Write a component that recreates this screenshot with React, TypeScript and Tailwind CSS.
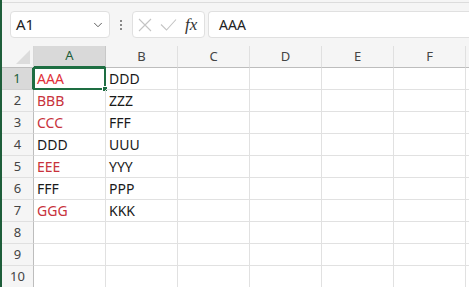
import React from 'react';
import { ChevronDown } from 'lucide-react';

const COLS = ['A', 'B', 'C', 'D', 'E', 'F', ''];

type Cell = { text: string; red?: boolean };

const DATA: Cell[][] = [
  [{ text: 'AAA', red: true }, { text: 'DDD' }],
  [{ text: 'BBB', red: true }, { text: 'ZZZ' }],
  [{ text: 'CCC', red: true }, { text: 'FFF' }],
  [{ text: 'DDD' }, { text: 'UUU' }],
  [{ text: 'EEE', red: true }, { text: 'YYY' }],
  [{ text: 'FFF' }, { text: 'PPP' }],
  [{ text: 'GGG', red: true }, { text: 'KKK' }],
  [],
  [],
  [],
];

const App: React.FC = () => {
  return (
    <div
      className="w-[469px] h-[287px] overflow-hidden bg-[#f5f5f5] border-l-2 border-[#1e5e3a] text-[#222]"
      style={{ fontFamily: '"Noto Sans", "Open Sans", sans-serif' }}
    >
      {/* formula bar */}
      <div className="h-[44px] border-t border-[#dcdcdc] mt-[2px] flex items-start pt-[8px] pl-[8px] gap-[3px]">
        <div className="w-[100px] h-[27px] bg-white rounded-[4px] border border-[#e0e0e0] flex items-center pl-[5px] pr-[4px]">
          <span className="text-[15px] flex-1">A1</span>
          <ChevronDown size={14} strokeWidth={1.6} className="text-[#555]" />
        </div>
        <div className="w-[16px] h-[27px] flex flex-col items-center justify-center gap-[2px]">
          <span className="w-[2px] h-[2px] bg-[#888]" />
          <span className="w-[2px] h-[2px] bg-[#888]" />
          <span className="w-[2px] h-[2px] bg-[#888]" />
        </div>
        <div className="w-[73px] h-[27px] bg-white rounded-[4px] border border-[#e0e0e0] flex items-center pl-[5px]">
          <svg width="14" height="14" viewBox="0 0 14 14" className="text-[#c4c4c4]">
            <path d="M1 1 L13 13 M13 1 L1 13" stroke="currentColor" strokeWidth="1.1" fill="none" />
          </svg>
          <svg width="17" height="13" viewBox="0 0 17 13" className="ml-[8px] text-[#c4c4c4]">
            <path d="M1 6.5 L6.5 12 L16 1.5" stroke="currentColor" strokeWidth="1.1" fill="none" />
          </svg>
          <span
            className="ml-[8px] text-[17px] italic text-[#333]"
            style={{ fontFamily: '"Liberation Serif", serif' }}
          >
            fx
          </span>
        </div>
        <div className="flex-1 h-[27px] bg-white rounded-l-[4px] border border-r-0 border-[#e0e0e0] flex items-center pl-[10px] text-[14px]">
          AAA
        </div>
      </div>

      {/* grid */}
      <div className="bg-white">
        {/* column headers */}
        <div className="flex h-[22px] bg-[#f5f5f5]">
          <div className="w-[32px] shrink-0 border-r border-[#d6d6d6] border-b border-b-[#bdbdbd] relative">
            <div className="absolute right-[3px] bottom-[3px] w-0 h-0 border-l-[14px] border-l-transparent border-b-[14px] border-b-[#dcdcdc]" />
          </div>
          {COLS.map((c, i) => (
            <div
              key={i}
              className={
                i === 0
                  ? 'w-[72px] shrink-0 bg-[#d9d9d9] border-r border-[#c8c8c8] border-b-2 border-b-[#1e6e42] flex items-center justify-center text-[13px] text-[#1e5e3a]'
                  : 'w-[72px] shrink-0 border-r border-[#e0e0e0] border-b border-b-[#bdbdbd] flex items-center justify-center text-[13px] text-[#444]'
              }
            >
              {c}
            </div>
          ))}
        </div>

        {/* rows */}
        {DATA.map((row, r) => (
          <div key={r} className="flex h-[22px]">
            <div
              className={
                r === 0
                  ? 'w-[32px] shrink-0 bg-[#d9d9d9] border-r-2 border-[#1e6e42] border-b border-b-[#d0d0d0] flex items-center justify-center text-[13px] text-[#1e5e3a]'
                  : 'w-[32px] shrink-0 bg-[#f5f5f5] border-r border-[#bdbdbd] border-b border-b-[#e0e0e0] flex items-center justify-center text-[13px] text-[#444]'
              }
            >
              {r + 1}
            </div>
            {COLS.map((_, ci) => {
              const cell = row[ci];
              return (
                <div
                  key={ci}
                  className="w-[72px] shrink-0 border-r border-b border-[#e1e1e1] relative flex items-center pl-[3px] text-[14px]"
                >
                  {cell && (
                    <span className={cell.red ? (r === 0 ? 'text-[#e0303a]' : 'text-[#c8323c]') : 'text-[#1a1a1a]'}>
                      {cell.text}
                    </span>
                  )}
                  {r === 0 && ci === 0 && (
                    <div className="absolute -left-px -top-px w-[73px] h-[23px] border-2 border-[#1e6e42]">
                      <div className="absolute -right-[4px] -bottom-[4px] w-[6px] h-[6px] bg-[#1e6e42] border border-white" />
                    </div>
                  )}
                </div>
              );
            })}
          </div>
        ))}
      </div>
    </div>
  );
};

export default App;
